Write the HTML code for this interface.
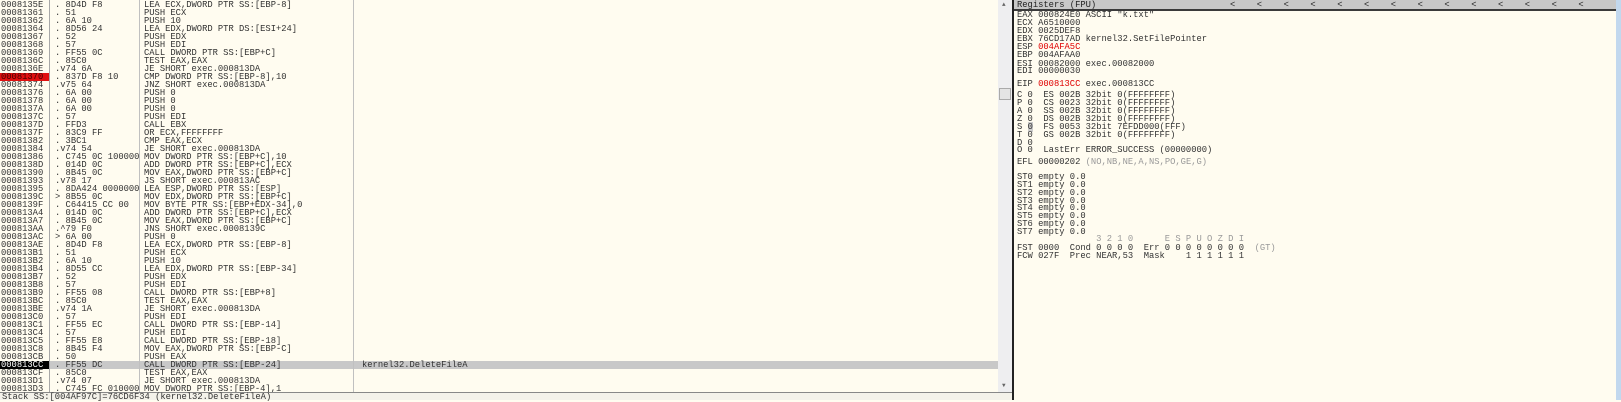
<!DOCTYPE html>
<html><head><meta charset="utf-8"><style>
*{margin:0;padding:0;box-sizing:border-box}
body{width:1621px;height:400px;overflow:hidden;background:#fffcf0;position:relative;font-family:"Liberation Mono","DejaVu Sans Mono",monospace;font-size:8.8px;color:#333}
.p{position:absolute;white-space:pre;line-height:8px;height:8px}
.c{position:absolute;top:0;height:393px;overflow:hidden}
.vl{position:absolute;top:0;height:393px;width:1px;background:#a8a8a8}
.red{color:#e00000}.g{color:#999}
</style></head><body>
<!-- selected row (behind text) -->
<div style="position:absolute;left:50px;top:361px;width:948px;height:8px;background:#c8c8c8"></div>
<!-- left pane columns -->
<div class="c" style="left:0;width:49px" id="ca"></div>
<div class="c" style="left:50px;width:89px" id="ch"></div>
<div class="c" style="left:140px;width:213px" id="cd"></div>
<div class="c" style="left:354px;width:644px" id="cc"></div>
<div class="vl" style="left:49px"></div><div class="vl" style="left:139px;background:#c0c0c0"></div><div class="vl" style="left:353px;background:#c0c0c0"></div>
<!-- scrollbar -->
<div style="position:absolute;left:998px;top:0;width:14px;height:393px;background:#eeeef0"></div>
<div class="p" style="left:1002px;top:1px;font-size:6px;color:#666">▲</div>
<div class="p" style="left:1002px;top:382px;font-size:6px;color:#666">▼</div>
<div style="position:absolute;left:999px;top:88px;width:12px;height:12px;background:#e4e4e4;border:1px solid #aaa"></div>
<div style="position:absolute;left:1012px;top:0;width:2px;height:400px;background:#222"></div>
<!-- status -->
<div style="position:absolute;left:0;top:392px;width:1012px;height:1px;background:#888"></div>
<div style="position:absolute;left:0;top:393px;width:1012px;height:7px;background:#f4f2ea"></div>
<div class="p" style="left:2px;top:393px">Stack SS:[004AF97C]=76CD6F34 (kernel32.DeleteFileA)</div>
<!-- right pane -->
<div style="position:absolute;left:1014px;top:0;width:602px;height:11px;background:#c8c8c8;border-bottom:2px solid #3a3a3a"></div>
<div class="p" style="left:1017px;top:1px;color:#222">Registers (FPU)</div>
<div id="chev"></div>
<div style="position:absolute;left:1616px;top:0;width:5px;height:400px;background:#c2d8ee"></div>
<div id="regs"></div>
<script>
var R=[["0008135E",". 8D4D F8","LEA ECX,DWORD PTR SS:[EBP-8]"],["00081361",". 51","PUSH ECX"],["00081362",". 6A 10","PUSH 10"],["00081364",". 8D56 24","LEA EDX,DWORD PTR DS:[ESI+24]"],["00081367",". 52","PUSH EDX"],["00081368",". 57","PUSH EDI"],["00081369",". FF55 0C","CALL DWORD PTR SS:[EBP+C]"],["0008136C",". 85C0","TEST EAX,EAX"],["0008136E",".v74 6A","JE SHORT exec.000813DA"],["00081370",". 837D F8 10","CMP DWORD PTR SS:[EBP-8],10"],["00081374",".v75 64","JNZ SHORT exec.000813DA"],["00081376",". 6A 00","PUSH 0"],["00081378",". 6A 00","PUSH 0"],["0008137A",". 6A 00","PUSH 0"],["0008137C",". 57","PUSH EDI"],["0008137D",". FFD3","CALL EBX"],["0008137F",". 83C9 FF","OR ECX,FFFFFFFF"],["00081382",". 3BC1","CMP EAX,ECX"],["00081384",".v74 54","JE SHORT exec.000813DA"],["00081386",". C745 0C 1000000","MOV DWORD PTR SS:[EBP+C],10"],["0008138D",". 014D 0C","ADD DWORD PTR SS:[EBP+C],ECX"],["00081390",". 8B45 0C","MOV EAX,DWORD PTR SS:[EBP+C]"],["00081393",".v78 17","JS SHORT exec.000813AC"],["00081395",". 8DA424 0000000","LEA ESP,DWORD PTR SS:[ESP]"],["0008139C","> 8B55 0C","MOV EDX,DWORD PTR SS:[EBP+C]"],["0008139F",". C64415 CC 00","MOV BYTE PTR SS:[EBP+EDX-34],0"],["000813A4",". 014D 0C","ADD DWORD PTR SS:[EBP+C],ECX"],["000813A7",". 8B45 0C","MOV EAX,DWORD PTR SS:[EBP+C]"],["000813AA",".^79 F0","JNS SHORT exec.0008139C"],["000813AC","> 6A 00","PUSH 0"],["000813AE",". 8D4D F8","LEA ECX,DWORD PTR SS:[EBP-8]"],["000813B1",". 51","PUSH ECX"],["000813B2",". 6A 10","PUSH 10"],["000813B4",". 8D55 CC","LEA EDX,DWORD PTR SS:[EBP-34]"],["000813B7",". 52","PUSH EDX"],["000813B8",". 57","PUSH EDI"],["000813B9",". FF55 08","CALL DWORD PTR SS:[EBP+8]"],["000813BC",". 85C0","TEST EAX,EAX"],["000813BE",".v74 1A","JE SHORT exec.000813DA"],["000813C0",". 57","PUSH EDI"],["000813C1",". FF55 EC","CALL DWORD PTR SS:[EBP-14]"],["000813C4",". 57","PUSH EDI"],["000813C5",". FF55 E8","CALL DWORD PTR SS:[EBP-18]"],["000813C8",". 8B45 F4","MOV EAX,DWORD PTR SS:[EBP-C]"],["000813CB",". 50","PUSH EAX"],["000813CC",". FF55 DC","CALL DWORD PTR SS:[EBP-24]","kernel32.DeleteFileA"],["000813CF",". 85C0","TEST EAX,EAX"],["000813D1",".v74 07","JE SHORT exec.000813DA"],["000813D3",". C745 FC 0100000","MOV DWORD PTR SS:[EBP-4],1"]];
var ca="",ch="",cd="",cc="";
R.forEach(function(r,i){var t=1+i*8;
var st="";if(i==9)st="background:#e01010;color:#400;";if(i==45)st="background:#000;color:#fff;";
ca+='<div class="p" style="left:0;width:49px;padding-left:1px;top:'+t+'px;'+st+'">'+r[0]+'</div>';
ch+='<div class="p" style="left:5px;top:'+t+'px">'+r[1]+'</div>';
cd+='<div class="p" style="left:4px;top:'+t+'px">'+r[2]+'</div>';
if(r[3])cc+='<div class="p" style="left:8px;top:'+t+'px">'+r[3]+'</div>';});
document.getElementById("ca").innerHTML=ca;document.getElementById("ch").innerHTML=ch;document.getElementById("cd").innerHTML=cd;document.getElementById("cc").innerHTML=cc;
var h="";for(var k=0;k<14;k++)h+='<div class="p" style="left:'+(1230+k*26.8)+'px;top:1px;color:#222">&lt;</div>';
document.getElementById("chev").innerHTML=h;
var L=[[11,'EAX 000824E0 ASCII "k.txt"'],[19,'ECX A6510000'],[27,'EDX 0025DEF8'],[35,'EBX 76CD17AD kernel32.SetFilePointer'],[43,'ESP <span class="red">004AFA5C</span>'],[51,'EBP 004AFAA0'],[60,'ESI 00082000 exec.00082000'],[67,'EDI 00000030'],[80,'EIP <span class="red">000813CC</span> exec.000813CC'],
[91,'C 0  ES 002B 32bit 0(FFFFFFFF)'],[99,'P 0  CS 0023 32bit 0(FFFFFFFF)'],[107,'A 0  SS 002B 32bit 0(FFFFFFFF)'],[115,'Z 0  DS 002B 32bit 0(FFFFFFFF)'],[123,'S <span style="background:#ccc">0</span>  FS 0053 32bit 7EFDD000(FFF)'],[131,'T 0  GS 002B 32bit 0(FFFFFFFF)'],[139,'D 0'],[146,'O 0  LastErr ERROR_SUCCESS (00000000)'],
[158,'EFL 00000202 <span class="g">(NO,NB,NE,A,NS,PO,GE,G)</span>']];
for(var s=0;s<8;s++)L.push([173+s*7.85,'ST'+s+' empty 0.0']);
L.push([235,'<span class="g">               3 2 1 0      E S P U O Z D I</span>']);
L.push([244,'FST 0000  Cond 0 0 0 0  Err 0 0 0 0 0 0 0 0  <span class="g">(GT)</span>']);
L.push([252,'FCW 027F  Prec NEAR,53  Mask    1 1 1 1 1 1']);
var g="";L.forEach(function(l){g+='<div class="p" style="left:1017px;top:'+l[0]+'px">'+l[1]+'</div>';});
document.getElementById("regs").innerHTML=g;
</script>
</body></html>
